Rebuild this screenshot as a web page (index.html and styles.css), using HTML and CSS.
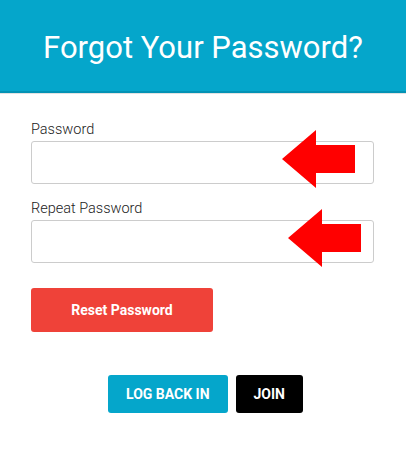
FILE: index.html
```html
<!DOCTYPE html>
<html lang="en">
<head>
    <meta charset="UTF-8">
    <meta name="viewport" content="width=device-width, initial-scale=1.0">
    <title>Forgot Your Password?</title>
    <link rel="stylesheet" href="styles.css">
</head>
<body>
    <!-- Cabeçalho -->
    <div class="page-header">
        <h1>Forgot Your Password?</h1>
    </div>

    <!-- Formulário -->
    <form class="reset-form" onsubmit="return false;">
        <div class="field">
            <label for="password">Password</label>
            <div class="input-wrap">
                <input type="password" id="password">
                <svg class="arrow arrow-first" width="73" height="58" viewBox="0 0 73 58">
                    <polygon points="0,29 34,0 34,15 73,15 73,43 34,43 34,58" fill="#ff0000"/>
                </svg>
            </div>
        </div>

        <div class="field">
            <label for="repeat">Repeat Password</label>
            <div class="input-wrap">
                <input type="password" id="repeat">
                <svg class="arrow arrow-second" width="73" height="58" viewBox="0 0 73 58">
                    <polygon points="0,29 34,0 34,15 73,15 73,43 34,43 34,58" fill="#ff0000"/>
                </svg>
            </div>
        </div>

        <button type="submit" class="reset-btn">Reset Password</button>

        <div class="links">
            <a href="#" class="link-btn login">Log back in</a>
            <a href="#" class="link-btn join">Join</a>
        </div>
    </form>
</body>
</html>
```

FILE: styles.css
```css
/* Estilo geral */
body {
    font-family: Roboto, "Liberation Sans", Arial, sans-serif;
    margin: 0;
    padding: 0;
    background-color: #fff;
}

/* Cabeçalho azul */
.page-header {
    background-color: #05a6cb;
    border-bottom: 2px solid #0392b4;
    box-shadow: 0 1px 0 #e2e2e2;
    height: 91px;
}

.page-header h1 {
    margin: 0;
    padding-top: 4px;
    line-height: 87px;
    font-size: 31px;
    font-weight: 400;
    color: #fff;
    text-align: center;
}

/* Formulário */
.reset-form {
    padding: 29px 32px 0 31px;
    display: flex;
    flex-direction: column;
}

.field {
    display: flex;
    flex-direction: column;
    margin-bottom: 17px;
}

.field label {
    font-size: 14.5px;
    font-weight: 300;
    line-height: 16px;
    color: #222;
    margin-bottom: 3px;
}

.input-wrap {
    position: relative;
}

.input-wrap input {
    display: block;
    width: 100%;
    height: 43px;
    box-sizing: border-box;
    border: 1px solid #cccccc;
    border-radius: 3px;
    background: #fff;
    padding: 0 10px;
    font-size: 14px;
}

/* Setas vermelhas por cima dos campos */
.arrow {
    position: absolute;
    top: -11px;
}

.arrow-first {
    left: 251px;
}

.arrow-second {
    left: 257px;
}

.reset-btn {
    align-self: flex-start;
    margin-top: 8px;
    width: 182px;
    height: 44px;
    border: none;
    border-radius: 3px;
    background-color: #ef4239;
    color: #fff;
    font-family: inherit;
    font-size: 14px;
    font-weight: 700;
    cursor: pointer;
}

/* Botões de links */
.links {
    display: flex;
    justify-content: center;
    gap: 8px;
    margin-top: 43px;
    padding-left: 6px;
}

.link-btn {
    display: block;
    height: 38px;
    line-height: 38px;
    padding: 0 18px;
    border-radius: 3px;
    color: #fff;
    font-size: 14px;
    font-weight: 700;
    text-transform: uppercase;
    text-decoration: none;
}

.link-btn.login {
    background-color: #05a6cb;
}

.link-btn.join {
    background-color: #000;
}
```
